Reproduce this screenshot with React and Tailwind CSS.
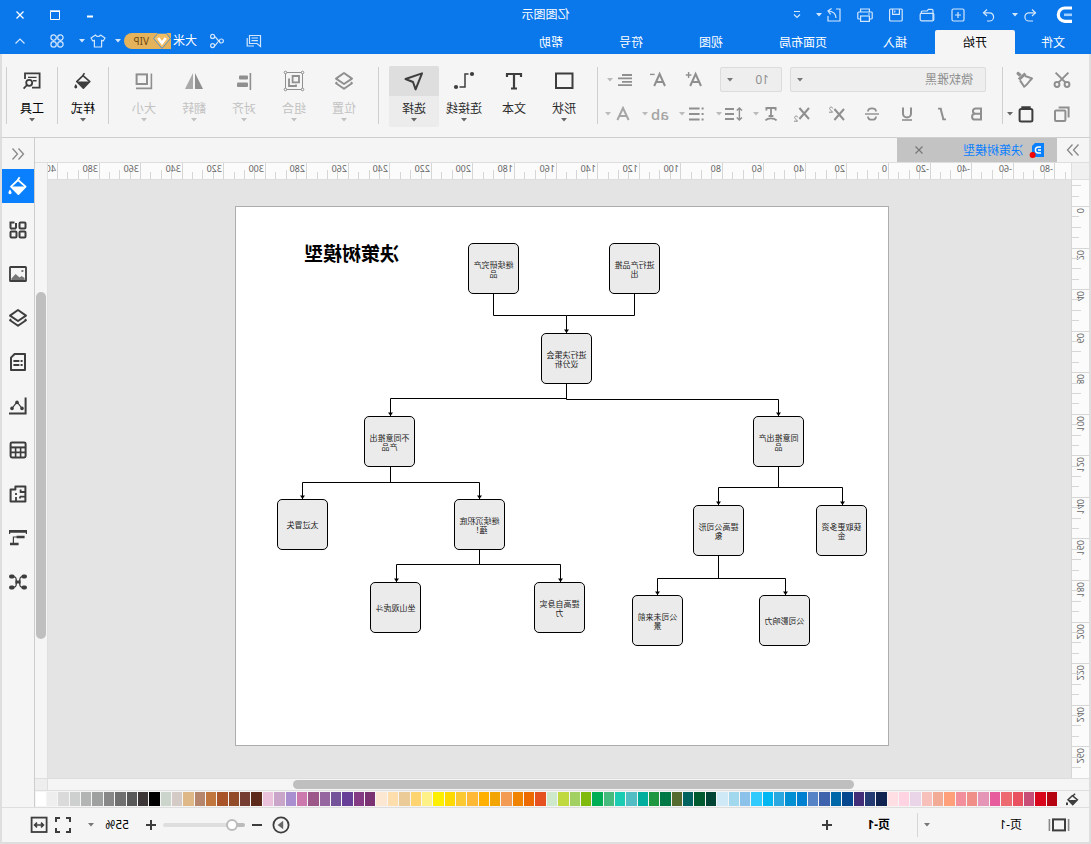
import React, { useState } from 'react';
import clsx from 'clsx';

const TABS = ['文件', '开始', '插入', '页面布局', '视图', '符号', '帮助'];

const SWATCHES = [
    '#b5040f', '#d9061b', '#c94e77', '#e95161', '#ec6a70', '#e75c9d', '#e596b7', '#f08f88', '#f38f9c', '#ffa07a',
    '#f2ab94', '#f8c0bb', '#ead5e8', '#ffd3e2', '#ffdfe4', '#10224f', '#243a72', '#422d79', '#05478f', '#0068a8',
    '#3f62ad', '#5583c5', '#0080d0', '#0090d3', '#2ca8e1', '#00b7f1', '#30cafc', '#8cc2ea', '#a1d8ee', '#cfeaf6',
    '#004436', '#005a30', '#006360', '#556b2f', '#007947', '#1f9640', '#00ae9e', '#52bdc3', '#1bccb3', '#47ba7d',
    '#00af55', '#7fba0c', '#a2d062', '#c0d93f', '#cde8ca', '#e5521f', '#ec6a00', '#f08300', '#f39b53', '#f2a500',
    '#ffb000', '#ffb936', '#fbca33', '#ffda00', '#feee00', '#fdf187', '#fed471', '#ebcc99', '#fedead', '#fce8d2',
    '#7b3272', '#843b84', '#673f96', '#74539b', '#9666a0', '#9c5888', '#cc7aae', '#a98fcf', '#c8a5c9', '#ebc2dc',
    '#5c291b', '#753c31', '#934c2a', '#a95328', '#c0763d', '#b5866b', '#deb887', '#d4cbc6', '#cbd5cc', '#000000',
    '#3d3637', '#595858', '#707070', '#888888', '#9ea1a0', '#b2b5b4', '#ced0cf', '#dadada', '#eeeeee', '#ffffff',
];

const NODES = [
    { x: 369, y: 36, text: '继续研究产品' },
    { x: 228, y: 36, text: '进行产品推出' },
    { x: 296, y: 126, text: '进行决策会议分析' },
    { x: 473, y: 209, text: '不同意推出产品' },
    { x: 84, y: 209, text: '同意推出产品' },
    { x: 560, y: 292, text: '太过冒失' },
    { x: 383, y: 292, text: '继续沉积底蕴！' },
    { x: 144, y: 298, text: '提高公司形象' },
    { x: 21, y: 298, text: '获取更多资金' },
    { x: 467, y: 375, text: '坐山观虎斗' },
    { x: 303, y: 375, text: '提高自身实力' },
    { x: 205, y: 388, text: '公司未来前景' },
    { x: 78, y: 388, text: '公司影响力' },
];

const LINKS = [
    'M253.5 87V108.5H321.5',
    'M394.5 87V108.5H321.5V126',
    'M321.5 176V192.5H109.5V209',
    'M321.5 176V191.5H497.5V209',
    'M497.5 260V275.5H585.5V292',
    'M497.5 260V275.5H408.5V292',
    'M109.5 260V280.5H45.5V298',
    'M109.5 260V280.5H169.5V298',
    'M408.5 343V357.5H491.5V375',
    'M408.5 343V357.5H327.5V375',
    'M169.5 349V371.5H230.5V388',
    'M169.5 349V371.5H102.5V388',
];

const ARROWS = [
    [321.5, 126], [109.5, 209], [497.5, 209], [585.5, 292], [408.5, 292], [45.5, 298],
    [169.5, 298], [491.5, 375], [327.5, 375], [230.5, 388], [102.5, 388],
];

// 20 ruler units in pixels
const STEP = 41.55;

function Icon({ size = 20, stroke = 2, className, children }) {
    return (
        <svg width={size} height={size} viewBox={`0 0 ${size} ${size}`} fill="none" stroke="currentColor" strokeWidth={stroke} className={clsx('shrink-0', className)} aria-hidden="true">
            {children}
        </svg>
    );
}

function Caret({ className }) {
    return (
        <svg width="6" height="4" viewBox="0 0 6 4" className={clsx('shrink-0', className)} fill="currentColor" aria-hidden="true">
            <path d="M0 0H6L3 3.6Z" />
        </svg>
    );
}

function IconButton({ label, className = 'w-6', children }) {
    return (
        <button type="button" aria-label={label} title={label} className={clsx('flex h-6 shrink-0 items-center justify-center', className)}>
            {children}
        </button>
    );
}

function Divider() {
    return <div className="mt-[13px] h-[57px] w-px shrink-0 bg-[#cfcfcf]" />;
}

/* ---------- shared drawings ---------- */

function Bucket({ className }) {
    return (
        <Icon className={className} stroke={1.8}>
            <path d="M8.4 1.2L10.2 4" />
            <path d="M10 4L17 10.6L9.6 18L2.4 10.6Z" strokeLinejoin="round" />
            <path d="M2.6 10.6H16.8L9.6 17.8Z" fill="currentColor" stroke="none" />
            <path d="M18 13.4C19 15 19.6 15.8 19.6 16.6A1.6 1.6 0 0 1 16.4 16.6C16.4 15.8 17 15 18 13.4Z" fill="currentColor" stroke="none" />
        </Icon>
    );
}

function Layers({ className }) {
    return (
        <Icon className={className} stroke={1.9}>
            <path d="M10 2L18 7.6L10 13L2 7.6Z" strokeLinejoin="round" />
            <path d="M3.2 11.2L2 12.2L10 17.8L18 12.2L16.8 11.2" strokeLinejoin="round" />
        </Icon>
    );
}

/* ---------- header ---------- */

function Logo() {
    return (
        <svg width="16" height="18" viewBox="0 0 16 18" fill="none" aria-label="logo" className="mr-[7px] shrink-0">
            <path d="M0 2.2H6.6A6.8 6.8 0 0 0 6.6 15.4H0" stroke="none" />
            <path d="M0 2H7A6.6 6.6 0 0 1 7 15.4H0" stroke="#fff" strokeWidth="3.2" />
            <path d="M0 8.8H8" stroke="#9fd0ff" strokeWidth="2.6" />
        </svg>
    );
}

function Header({ active, onChange }) {
    return (
        <header className="h-[54px] shrink-0 bg-[#0a77eb] text-white">
            <div className="grid h-[30px] grid-cols-[1fr_auto_1fr] items-center">
                <div className="flex items-center gap-[7px] pl-[19px] text-[#d3e7fc]">
                    <Logo />
                    <div className="flex items-center pr-1">
                        <IconButton label="撤销">
                            <Icon size={16} stroke={1.2}>
                                <path d="M6 2.5L2.5 5.8L6 9" />
                                <path d="M2.5 5.8H9A4 4 0 0 1 9 14H5" />
                            </Icon>
                        </IconButton>
                        <Caret />
                    </div>
                    <IconButton label="恢复">
                        <Icon size={16} stroke={1.2}>
                            <path d="M10 2.5L13.5 5.8L10 9" />
                            <path d="M13.5 5.8H7.5A4 4 0 0 0 7.5 14H10" />
                        </Icon>
                    </IconButton>
                    <IconButton label="新建">
                        <Icon size={16} stroke={1.2}>
                            <rect x="2" y="2" width="12" height="12" rx="1.5" />
                            <path d="M8 5V11M5 8H11" />
                        </Icon>
                    </IconButton>
                    <IconButton label="打开">
                        <Icon size={16} stroke={1.2}>
                            <path d="M2 13.5V3.5A1.2 1.2 0 0 1 3.2 2.3H6.5L8 4H12.5A1.2 1.2 0 0 1 13.7 5.2V6.3" />
                            <path d="M1.2 12.6V7.6A1.2 1.2 0 0 1 2.4 6.4H13.6A1.2 1.2 0 0 1 14.8 7.6V12.6A1.2 1.2 0 0 1 13.6 13.8H2.4A1.2 1.2 0 0 1 1.2 12.6Z" />
                        </Icon>
                    </IconButton>
                    <IconButton label="保存">
                        <Icon size={16} stroke={1.2}>
                            <rect x="1.8" y="2" width="12.6" height="12" rx="1" />
                            <path d="M4.6 2V7.4H11.4V2M9.2 3.4V5.6" />
                        </Icon>
                    </IconButton>
                    <IconButton label="打印">
                        <Icon size={16} stroke={1.2}>
                            <path d="M3.6 5V2H12.4V5" />
                            <path d="M3.6 12H1.6A1 1 0 0 1 .8 11V6A1 1 0 0 1 1.8 5H14.2A1 1 0 0 1 15.2 6V11A1 1 0 0 1 14.2 12H12.4" />
                            <rect x="3.6" y="9" width="8.8" height="5.4" />
                            <path d="M3 7H5" />
                        </Icon>
                    </IconButton>
                    <div className="flex items-center">
                        <IconButton label="导出">
                            <Icon size={16} stroke={1.2}>
                                <path d="M6 2H2V14H14V9" />
                                <path d="M6 11C6 7 8 4.6 13.6 4M10.4 1.4L14 4L11.4 7.4" />
                            </Icon>
                        </IconButton>
                        <Caret />
                    </div>
                    <IconButton label="更多">
                        <Icon size={10} stroke={1.2}>
                            <path d="M2 1.5H8M2 4.5L5 7.4L8 4.5" />
                        </Icon>
                    </IconButton>
                </div>
                <h1 className="text-xs">亿图图示</h1>
                <div className="flex justify-end pr-[3px]">
                    <IconButton label="最小化" className="w-[35px]">
                        <Icon size={12}><path d="M3 7.5H9" /></Icon>
                    </IconButton>
                    <IconButton label="最大化" className="w-[35px]">
                        <Icon size={12} stroke={1}><path d="M2 2.5H10.5V10.5H1.5V2" /><path d="M1 1.8H11" stroke="#fff" /></Icon>
                    </IconButton>
                    <IconButton label="关闭" className="w-[35px]">
                        <Icon size={12} stroke={1.3}><path d="M2.5 2.5L9.5 9.5M9.5 2.5L2.5 9.5" /></Icon>
                    </IconButton>
                </div>
            </div>
            <div className="flex h-6 justify-between">
                <nav className="flex">
                    {TABS.map((tab, i) => (
                        <button
                            key={tab}
                            type="button"
                            onClick={() => onChange(tab)}
                            className={clsx(
                                'h-6 pt-0.5 text-xs',
                                i === 0 ? 'w-[76px]' : 'px-7',
                                active === tab && 'rounded-t-xs bg-[#f5f5f5] text-black'
                            )}
                        >
                            {tab}
                        </button>
                    ))}
                </nav>
                <div className="flex items-center pr-[3px] pb-0.5 text-[#d3e7fc]">
                    <IconButton label="消息" className="mr-[13px] w-6">
                        <Icon size={16} stroke={1.2}>
                            <path d="M1.5 2.5H12.5V10.5H5L1.5 13.5Z" />
                            <path d="M4 5H10.5M4 7.7H10.5M14.8 5V13H8" />
                        </Icon>
                    </IconButton>
                    <IconButton label="分享" className="mr-2 w-6">
                        <Icon size={16} stroke={1.2}>
                            <circle cx="3.6" cy="8" r="2" />
                            <circle cx="12.4" cy="3.4" r="2" />
                            <circle cx="12.4" cy="12.6" r="2" />
                            <path d="M5.5 8C8 8 8.4 3.8 10.4 3.6M5.5 8C8 8 8.4 12.4 10.4 12.6" />
                        </Icon>
                    </IconButton>
                    <span className="mr-0.5 text-xs text-white">大米</span>
                    <div className="mr-1 flex h-4 w-[47px] items-center rounded-r-full rounded-l-lg bg-[#e5b35b]">
                        <svg width="18" height="16" viewBox="0 0 18 16" fill="none" aria-hidden="true">
                            <path d="M4.5 .5H13.5L17.4 5.5L9 15.4L.6 5.5Z" fill="#f3bd63" stroke="#2f86dc" strokeWidth=".8" />
                            <path d="M5.2 5L9 10L12.8 5" stroke="#fff" strokeWidth="2.6" />
                        </svg>
                        <span className="ml-1 text-[10px] leading-4 text-[#6f4a12]">VIP</span>
                    </div>
                    <Caret className="mx-[7px] -ml-px" />
                    <IconButton label="皮肤" className="w-5">
                        <Icon size={16} stroke={1.2}>
                            <path d="M5.5 2L1 5L2.8 8L4.4 7.2V14H11.6V7.2L13.2 8L15 5L10.5 2C9.6 4 6.4 4 5.5 2Z" strokeLinejoin="round" />
                        </Icon>
                    </IconButton>
                    <Caret className="mx-[3px]" />
                    <IconButton label="应用" className="mx-[7px] w-6">
                        <Icon size={16} stroke={1.2}>
                            <circle cx="4.6" cy="4.6" r="2.7" />
                            <circle cx="11.4" cy="4.6" r="2.7" />
                            <circle cx="4.6" cy="11.4" r="2.7" />
                            <circle cx="11.4" cy="11.4" r="2.7" />
                        </Icon>
                    </IconButton>
                    <IconButton label="收起功能区" className="w-[35px]">
                        <Icon size={12} stroke={1.2}><path d="M1.5 8.5L6 4L10.5 8.5" /></Icon>
                    </IconButton>
                </div>
            </div>
        </header>
    );
}

/* ---------- ribbon ---------- */

function BigButton({ label, active, disabled, strong, caret = true, children }) {
    return (
        <button
            type="button"
            disabled={disabled}
            className={clsx(
                'mt-3 flex h-[61px] w-[50px] shrink-0 flex-col items-center',
                active && 'rounded-xs bg-[#ececec]',
                disabled ? 'text-[#c2c2c2]' : strong ? 'text-black' : 'text-[#2b2b2b]'
            )}
        >
            <span className={clsx('flex h-[30px] w-full items-center justify-center', active && 'rounded-t-xs bg-[#dedede]', disabled ? 'text-[#8f8f8f]' : 'text-[#3d3d3d]')}>
                {children}
            </span>
            <span className="mt-[5px] h-4 text-xs leading-4">{label}</span>
            {caret && <Caret className={clsx('mt-px', disabled ? 'text-[#c2c2c2]' : 'text-[#666]')} />}
        </button>
    );
}

function DropTool({ label, children }) {
    return (
        <div className="flex items-center">
            <IconButton label={label}>{children}</IconButton>
            <Caret className="text-[#bbb]" />
        </div>
    );
}

function Select({ label, className, value, options, caretClass = 'right-[6px]' }) {
    return (
        <div className={clsx('relative', className)}>
            <select aria-label={label} defaultValue={value} className="h-full w-full appearance-none bg-transparent outline-none">
                {options.map((o) => (
                    <option key={o}>{o}</option>
                ))}
            </select>
            <Caret className={clsx('pointer-events-none absolute top-1/2 -translate-y-1/2 text-[#777]', caretClass)} />
        </div>
    );
}

function Ribbon() {
    return (
        <div className="flex h-[84px] shrink-0 border-x-2 border-b border-x-[#dedede] border-b-[#cfcfcf] bg-[#f5f5f5] text-[#8f8f8f]">
            <div className="flex w-[86px] shrink-0 flex-col gap-[10px] pt-[14px] pl-2">
                <div className="flex">
                    <IconButton label="剪切" className="w-[37px]">
                        <Icon size={18}>
                            <circle cx="4" cy="13.5" r="2.4" />
                            <circle cx="14" cy="13.5" r="2.4" />
                            <path d="M2.6 1.6L12.6 11.6M15.4 1.6L5.4 11.6" />
                        </Icon>
                    </IconButton>
                    <IconButton label="格式刷" className="w-[37px]">
                        <Icon size={18}>
                            <path d="M12.4 3.6L15.4 .8A1.8 1.8 0 0 1 17.4 3.2L14.6 5.8Z" fill="currentColor" stroke="none" />
                            <path d="M9.6 1.6L16.2 7.6L14 9.6L7.6 3.8Z" fill="currentColor" stroke="none" />
                            <path d="M9 5L2 7.4C4 9 5.4 12.6 9.8 15.8L14 9.4" strokeLinejoin="round" />
                        </Icon>
                    </IconButton>
                </div>
                <div className="flex items-center">
                    <IconButton label="复制" className="w-[37px]">
                        <Icon size={18}>
                            <path d="M12.4 2.4H2.4V12.4" />
                            <rect x="5.6" y="5.6" width="10.4" height="10.4" rx="1" />
                        </Icon>
                    </IconButton>
                    <IconButton label="粘贴" className="ml-[5px] w-[26px] text-[#3d3d3d]">
                        <Icon size={18}>
                            <rect x="2.6" y="4" width="12.8" height="12.4" rx="1.5" />
                            <path d="M5.6 5V2.5H12.4V5" strokeWidth="2.6" />
                        </Icon>
                    </IconButton>
                    <Caret className="text-[#666]" />
                </div>
            </div>
            <Divider />
            <div className="flex w-[404px] shrink-0 flex-col gap-[10px] pt-[13px]">
                <div className="flex h-[25px] items-center pl-4 text-xs">
                    <Select label="字体" value="微软雅黑" options={['微软雅黑', '宋体', '黑体']} className="h-[25px] w-[196px] rounded-xs border border-[#dcdcdc] bg-[#eee] pl-3" />
                    <Select label="字号" value="10" options={['8', '9', '10', '12', '14']} className="ml-2 h-[25px] w-[62px] rounded-xs border border-[#dcdcdc] bg-[#eee] pl-3" />
                    <IconButton label="增大字号" className="ml-2 w-9">
                        <Icon size={18}>
                            <path d="M2 15L7.4 3L12.8 15M4 11H11" />
                            <path d="M14.4 1V7M11.6 4H17.2" strokeWidth="1.4" />
                        </Icon>
                    </IconButton>
                    <IconButton label="减小字号" className="w-9">
                        <Icon size={18}>
                            <path d="M2 15L7.4 3L12.8 15M4 11H11" />
                            <path d="M12.4 3.4H17" strokeWidth="1.4" />
                        </Icon>
                    </IconButton>
                    <div className="ml-[3px]">
                        <DropTool label="对齐方式">
                            <Icon size={16}>
                                <path d="M1 3H11M1 6.4H15M1 9.8H11M1 13.2H15" strokeWidth="1.8" />
                            </Icon>
                        </DropTool>
                    </div>
                </div>
                <div className="flex items-center pl-[7px]">
                    <IconButton label="加粗" className="w-[35px]">
                        <Icon size={16}><path d="M4 2.4H9.4A2.7 2.7 0 0 1 9.4 7.8H4ZM4 7.8H10A2.9 2.9 0 0 1 10 13.6H4Z" /></Icon>
                    </IconButton>
                    <IconButton label="斜体" className="w-[35px]">
                        <Icon size={16}><path d="M9.4 2.6L6.6 13.4" /><path d="M8.4 2.6H12M4 13.4H7.6" strokeWidth="1.6" /></Icon>
                    </IconButton>
                    <IconButton label="下划线" className="w-[35px]">
                        <Icon size={16}><path d="M4 1.6V7.4A4 4 0 0 0 12 7.4V1.6" /><path d="M3 14H13" strokeWidth="1.6" /></Icon>
                    </IconButton>
                    <IconButton label="删除线" className="w-[35px]">
                        <Icon size={16} stroke={1.8}><path d="M12 5.6C12 1.4 4 1.4 4 5.6M4 10.4C4 14.8 12 14.8 12 10.4" /><path d="M1 8H15" strokeWidth="1.4" /></Icon>
                    </IconButton>
                    <IconButton label="上标" className="w-[35px]">
                        <Icon size={18}>
                            <path d="M2 4L11.6 15M11.6 4L2 15" />
                            <path d="M13.4 3.4C13.4 1.6 16.6 1.6 16.4 3.6C16.2 5 14 5.8 13.4 7.2H17" strokeWidth="1" />
                        </Icon>
                    </IconButton>
                    <IconButton label="下标" className="w-[35px]">
                        <Icon size={18}>
                            <path d="M2 3L11.6 14M11.6 3L2 14" />
                            <path d="M13.4 12.4C13.4 10.6 16.6 10.6 16.4 12.6C16.2 14 14 14.8 13.4 16.2H17" strokeWidth="1" />
                        </Icon>
                    </IconButton>
                    <div className="ml-0.5 flex gap-[7px]">
                        <DropTool label="文字方向">
                            <Icon size={16} stroke={1.8}><path d="M3.4 4.4V2H12.6V4.4M8 2V10M5.6 10H10.4M2.4 14.4C5 11.8 11 11.8 13.6 14.4" /></Icon>
                        </DropTool>
                        <DropTool label="行距">
                            <Icon size={18}>
                                <path d="M9 4H18M9 9H18M9 14H18" />
                                <path d="M3.6 3V15M1 5.6L3.6 3L6.2 5.6M1 12.4L3.6 15L6.2 12.4" strokeWidth="1.4" />
                            </Icon>
                        </DropTool>
                        <DropTool label="项目符号">
                            <Icon size={16}><path d="M5.4 2.6H16M5.4 8H16M5.4 13.4H16M1.4 2.6H3.4M1.4 8H3.4M1.4 13.4H3.4" /></Icon>
                        </DropTool>
                        <DropTool label="高亮">
                            <span className="font-['Open_Sans'] text-[15px] leading-6 font-semibold text-[#a5a5a5]">ab</span>
                        </DropTool>
                        <DropTool label="字体颜色">
                            <Icon size={16} className="text-[#a5a5a5]"><path d="M2.4 14L8 2L13.6 14M4.4 10H11.6" /></Icon>
                        </DropTool>
                    </div>
                </div>
            </div>
            <Divider />
            <div className="ml-2 flex">
                <BigButton label="形状">
                    <Icon size={24}><rect x="3.5" y="4.5" width="16.5" height="14.5" /></Icon>
                </BigButton>
                <BigButton label="文本" caret={false}>
                    <Icon size={24} stroke={2.2}><path d="M5 8V5H19V8M12 5V19.5M9 19.5H15" /></Icon>
                </BigButton>
                <BigButton label="连接线">
                    <Icon size={24} stroke={1.5}>
                        <circle cx="4" cy="5" r="2.1" fill="currentColor" stroke="none" />
                        <circle cx="20" cy="18" r="2.1" fill="currentColor" stroke="none" />
                        <path d="M7.5 5H11V18H16.5" />
                    </Icon>
                </BigButton>
                <BigButton label="选择" active>
                    <Icon size={24}><path d="M20.5 10L4 4.4L10.4 20.4L13 13Z" strokeLinejoin="round" /></Icon>
                </BigButton>
            </div>
            <div className="ml-2.5 flex">
                <Divider />
                <div className="ml-[9px] flex">
                    <BigButton label="位置" disabled><Layers /></BigButton>
                    <BigButton label="组合" disabled>
                        <Icon size={22} stroke={1}>
                            <rect x="2.5" y="2.5" width="17" height="17" />
                            <g fill="#f5f5f5">
                                <circle cx="2.5" cy="2.5" r="1.3" />
                                <circle cx="19.5" cy="2.5" r="1.3" />
                                <circle cx="2.5" cy="19.5" r="1.3" />
                                <circle cx="19.5" cy="19.5" r="1.3" />
                            </g>
                            <path d="M6 6H12.4V12.4H6ZM15 9.4H16V16H9V14.6" strokeWidth="1.8" />
                        </Icon>
                    </BigButton>
                    <BigButton label="对齐" disabled>
                        <Icon size={20} stroke={1.6}>
                            <path d="M3.6 2V19" />
                            <rect x="6" y="4.4" width="9" height="4.2" rx="1" fill="currentColor" stroke="none" />
                            <rect x="6" y="11.4" width="11" height="4.6" rx="1" fill="currentColor" stroke="none" />
                        </Icon>
                    </BigButton>
                    <BigButton label="翻转" disabled>
                        <Icon size={20} stroke={0}>
                            <path d="M9 2V18H1Z" fill="currentColor" />
                            <path d="M11 2V18H19Z" fill="#a9a9a9" />
                        </Icon>
                    </BigButton>
                    <BigButton label="大小" disabled>
                        <Icon size={20}>
                            <rect x="7" y="3.4" width="10.4" height="9.6" />
                            <path d="M2.6 2.4V17.4H18" strokeWidth="1.6" />
                        </Icon>
                    </BigButton>
                </div>
            </div>
            <div className="ml-auto flex">
                <Divider />
                <BigButton label="样式" strong><Bucket className="size-[18px]" /></BigButton>
                <Divider />
                <BigButton label="工具" strong>
                    <Icon size={20} stroke={1.8}>
                        <path d="M10 16.6H2.4V2.4H17V8" />
                        <path d="M5.4 6.4H14M5.4 9.8H9" strokeWidth="1.4" />
                        <circle cx="12.8" cy="11.8" r="3" />
                        <path d="M15 14L18.4 17.6" />
                    </Icon>
                </BigButton>
                <Divider />
                <div className="w-1" />
            </div>
        </div>
    );
}

/* ---------- workspace ---------- */

function Ruler({ vertical, last }) {
    const origin = vertical ? 26 : 182;
    const ticks = [];
    for (let i = -17; i <= last; i++) {
        const p = Math.round(origin + (i * STEP) / 4);
        if (p < 0) continue;
        const len = i % 4 === 0 ? 17 : i % 2 === 0 ? 9 : 7;
        ticks.push({ i, p, len });
    }

    return (
        <svg
            className={clsx('block overflow-hidden bg-[#fbfbfb]', vertical ? 'h-full w-[17px]' : 'h-4 min-w-0 flex-1')}
            fontFamily="'Noto Sans', sans-serif"
            fontSize="9"
            fill="#666"
        >
            {ticks.map(({ i, p, len }) => (
                <g key={i}>
                    {vertical ? (
                        <rect x={17 - len} y={p} width={len} height="1" fill="#d6d6d6" />
                    ) : (
                        <rect x={p} y={16 - Math.min(len, 16)} width="1" height={len} fill="#d6d6d6" />
                    )}
                    {i % 4 === 0 &&
                        (vertical ? (
                            <text transform={`translate(12 ${p + 2}) rotate(-90)`} textAnchor="end">{i * 5}</text>
                        ) : (
                            <text x={p + 2} y="9">{i * 5}</text>
                        ))}
                </g>
            ))}
        </svg>
    );
}

function DocTabs() {
    return (
        <div className="flex h-[25px] shrink-0 border-b border-[#dedede]">
            <IconButton label="展开左侧栏" className="w-8 text-[#888]">
                <Icon size={14} stroke={1.3}><path d="M1.5 1.5L6.5 7L1.5 12.5M7.5 1.5L12.5 7L7.5 12.5" /></Icon>
            </IconButton>
            <div className="flex w-40 items-center bg-[#c3c3c3] pl-[13px]">
                <svg width="15" height="16" viewBox="0 0 15 16" fill="none" aria-hidden="true">
                    <path d="M0 1H9L12 4V15H0Z" fill="#0a80ff" />
                    <path d="M3 5H5.6A3 3 0 0 1 5.6 11H3M3 8H6" stroke="#fff" strokeWidth="1.4" />
                    <circle cx="11.4" cy="13" r="3" fill="#f40000" />
                </svg>
                <span className="ml-[6px] pt-0.5 text-xs text-[#0a80ff]">决策树模型</span>
                <IconButton label="关闭文档" className="mr-[10px] ml-auto w-6 text-[#777]">
                    <Icon size={10} stroke={1.2}><path d="M1.5 1.5L8.5 8.5M8.5 1.5L1.5 8.5" /></Icon>
                </IconButton>
            </div>
        </div>
    );
}

function Page() {
    return (
        <div className="relative mt-[26px] ml-[182px] h-[540px] w-[654px] border border-[#adadad] bg-white">
            <svg className="absolute inset-0 h-full w-full" fill="none" stroke="#000" aria-hidden="true">
                {LINKS.map((d) => (
                    <path key={d} d={d} />
                ))}
                {ARROWS.map(([x, y]) => (
                    <path key={x} d={`M${x - 2.5} ${y - 3.5}H${x + 2.5}L${x} ${y}Z`} fill="#000" stroke="none" />
                ))}
            </svg>
            {NODES.map((n) => (
                <div
                    key={n.text}
                    className="absolute flex size-[51px] items-center justify-center rounded-[5px] border border-black bg-[#ebebeb] px-1 text-center text-[8px] leading-[9px] break-all text-[#222]"
                    style={{ left: n.x, top: n.y }}
                >
                    {n.text}
                </div>
            ))}
            <h2 className="absolute top-[35px] left-[489px] text-[19px] leading-6 font-bold whitespace-nowrap text-black">决策树模型</h2>
        </div>
    );
}

function Workspace() {
    return (
        <div className="flex min-h-0 flex-1">
            <div className="flex min-w-0 flex-1 flex-col">
                <div className="flex h-[17px] shrink-0 border-b border-[#dedede]">
                    <div className="w-[18px] shrink-0 border-r border-[#dedede] bg-[#f0f0f0]" />
                    <Ruler last={80} />
                </div>
                <div className="flex min-h-0 flex-1">
                    <div className="w-[18px] shrink-0 border-r border-[#d6d6d6]">
                        <Ruler vertical last={54} />
                    </div>
                    <main className="min-w-0 flex-1 overflow-hidden bg-[#e4e4e4]">
                        <Page />
                    </main>
                </div>
            </div>
            <div className="w-[13px] shrink-0 border-l border-[#e0e0e0] pl-px">
                <div className="mt-[129px] h-[347px] w-[10px] rounded-full bg-[#bfbfbf]" />
            </div>
        </div>
    );
}

function Palette() {
    return (
        <div className="flex h-4 shrink-0 items-center pr-px">
            <div className="flex w-8 shrink-0 items-center justify-center text-[#3d3d3d]">
                <svg width="13" height="13" viewBox="0 0 20 20" fill="none" stroke="currentColor" strokeWidth="2.2" aria-hidden="true">
                    <path d="M6 1L10 5M10 4L17 10.6L9.6 18L2.4 10.6Z" />
                    <path d="M2.6 10.6H16.8L9.6 17.8Z" fill="currentColor" stroke="none" />
                    <rect x="17" y="14.6" width="3" height="4" fill="currentColor" stroke="none" />
                </svg>
            </div>
            <div className="flex h-[14px] min-w-0 flex-1 gap-px">
                {SWATCHES.map((c) => (
                    <button key={c} type="button" aria-label={c} className="h-full min-w-0 flex-1" style={{ backgroundColor: c }} />
                ))}
            </div>
        </div>
    );
}

/* ---------- right side bar ---------- */

const PANELS = [
    { label: '填充', icon: <Bucket /> },
    {
        label: '符号库',
        icon: (
            <Icon>
                <rect x="2.5" y="2.5" width="6" height="6" rx="1" />
                <path d="M12 8.5H16A1 1 0 0 0 17.5 7.5V2.5H13.5M12 3V8.5" />
                <rect x="2.5" y="11.5" width="6" height="6" rx="1" />
                <rect x="11.5" y="11.5" width="6" height="6" rx="1" />
            </Icon>
        ),
    },
    {
        label: '图片',
        icon: (
            <Icon stroke={1.8}>
                <rect x="2" y="3" width="16" height="14" rx=".6" />
                <path d="M3.4 16V14L6.4 12L8.4 13.6L12.4 10L16.6 14.4V16Z" fill="#777" stroke="none" />
                <rect x="4.6" y="6" width="2" height="2" fill="#777" stroke="none" />
            </Icon>
        ),
    },
    { label: '图层', icon: <Layers /> },
    {
        label: '文档',
        icon: (
            <Icon>
                <path d="M3 2H13.4L17 5.6V18H3Z" strokeLinejoin="round" />
                <path d="M5.4 9H7.4M8.6 9H14.6M5.4 13H7.4M8.6 13H14.6" strokeWidth="1.8" />
            </Icon>
        ),
    },
    {
        label: '图表',
        icon: (
            <Icon>
                <path d="M2.4 1.6V17.4H19" />
                <path d="M6 12.4L11 6L16 12.4" strokeWidth="1.2" />
                <circle cx="6" cy="12.4" r="1.8" fill="currentColor" stroke="none" />
                <circle cx="11" cy="6.4" r="1.8" fill="currentColor" stroke="none" />
                <circle cx="16" cy="12.4" r="1.8" fill="currentColor" stroke="none" />
            </Icon>
        ),
    },
    {
        label: '表格',
        icon: (
            <Icon>
                <rect x="2.4" y="2.4" width="15" height="15" rx="1.4" />
                <path d="M2.4 7.4H17.4" />
                <path d="M2.4 12.4H17.4M7.4 7.4V17.4M12.4 7.4V17.4" strokeWidth="1.6" />
            </Icon>
        ),
    },
    {
        label: '平面图',
        icon: (
            <Icon>
                <path d="M2.6 2.6H12.6V5.6H17.4V17.4H2.6Z" strokeLinejoin="round" />
                <path d="M2.6 8H7.4V5.4M2.6 12.6H8M8 12.4V14.6M12 17V13M12 9V11" strokeWidth="1.8" />
            </Icon>
        ),
    },
    {
        label: '甘特图',
        icon: (
            <Icon stroke={2.6}>
                <path d="M1 3.4H19M3.4 9H11.4M9.4 16H18" />
                <path d="M1.6 2V6M18.4 2V6M11 9H14.6V15" strokeWidth="1.2" />
            </Icon>
        ),
    },
    {
        label: '思维导图',
        icon: (
            <Icon stroke={1.4}>
                <path d="M5 4.6C9 4.6 8 7 8.4 10C8 13 9 15.4 5 15.4M15 4.6C11 4.6 12 7 11.6 10C12 13 11 15.4 15 15.4" />
                <path d="M3 4.6H4.6M15.4 4.6H17M3 15.4H4.6M15.4 15.4H17" strokeWidth="4" strokeLinecap="round" />
                <path d="M7.4 10H12.6" strokeWidth="3" />
            </Icon>
        ),
    },
];

function SideBar() {
    const [panel, setPanel] = useState('填充');

    return (
        <aside className="flex w-[33px] shrink-0 flex-col border-l border-[#cdcdcd] text-[#3d3d3d]">
            <div className="flex h-[31px] items-center justify-center text-[#888]">
                <IconButton label="收起右侧栏">
                    <Icon size={14} stroke={1.3}><path d="M6.5 1.5L1.5 7L6.5 12.5M12.5 1.5L7.5 7L12.5 12.5" /></Icon>
                </IconButton>
            </div>
            {PANELS.map(({ label, icon }) => (
                <button
                    key={label}
                    type="button"
                    aria-label={label}
                    title={label}
                    onClick={() => setPanel(label)}
                    className={clsx('mb-[10px] flex h-[34px] w-full items-center justify-center', panel === label && 'bg-[#0a80ff] text-white')}
                >
                    {icon}
                </button>
            ))}
        </aside>
    );
}

/* ---------- status bar ---------- */

function StatusBar() {
    const [zoom, setZoom] = useState(10);

    return (
        <footer className="flex h-[35px] shrink-0 items-center border-t border-[#dedede] pr-[25px] pl-[18px] text-xs text-[#3d3d3d]">
            <IconButton label="页面列表">
                <Icon size={22}>
                    <rect x="5" y="5.4" width="12" height="11" />
                    <path d="M1.4 5V17M20.6 5V17" stroke="#888" strokeWidth="1.6" />
                </Icon>
            </IconButton>
            <Select label="当前页" value="页-1" options={['页-1']} className="ml-[25px] h-6 w-[105px] border-r border-[#d6d6d6] text-black" />
            <button type="button" className="ml-[27px] font-bold text-black">页-1</button>
            <IconButton label="新增页" className="ml-[28px] w-6">
                <Icon size={12}><path d="M6 1V11M1 6H11" /></Icon>
            </IconButton>
            <div className="ml-auto flex items-center">
                <IconButton label="演示">
                    <Icon size={18} stroke={1.8}>
                        <circle cx="9" cy="9" r="7.6" />
                        <path d="M6.8 4.8V13.2L12.4 9Z" fill="#666" stroke="none" />
                    </Icon>
                </IconButton>
                <IconButton label="缩小">
                    <Icon size={12}><path d="M1 6H11" /></Icon>
                </IconButton>
                <input
                    type="range"
                    aria-label="缩放"
                    min="0"
                    max="100"
                    value={zoom}
                    onChange={(e) => setZoom(Number(e.target.value))}
                    className="h-1 w-[82px] appearance-none rounded-full bg-[#dedede] [&::-webkit-slider-thumb]:size-3 [&::-webkit-slider-thumb]:appearance-none [&::-webkit-slider-thumb]:rounded-full [&::-webkit-slider-thumb]:border-2 [&::-webkit-slider-thumb]:border-[#bbb] [&::-webkit-slider-thumb]:bg-white"
                    style={{ backgroundImage: `linear-gradient(to right, #bbb ${zoom}%, transparent ${zoom}%)` }}
                />
                <IconButton label="放大">
                    <Icon size={12}><path d="M6 1V11M1 6H11" /></Icon>
                </IconButton>
                <Select label="显示比例" value="55%" options={['55%', '100%']} className="mr-[11px] ml-[10px] h-6 w-[43px] text-black" caretClass="right-0.5" />
                <IconButton label="全屏">
                    <Icon size={18}><path d="M2 6V2H6M12 2H16V6M16 12V16H12M6 16H2V12" /></Icon>
                </IconButton>
                <IconButton label="适应宽度">
                    <Icon size={18} stroke={1.8}>
                        <rect x="1.4" y="1.6" width="15" height="14.4" />
                        <path d="M4.6 9H13.2M7 6.6L4.6 9L7 11.4M11 6.6L13.4 9L11 11.4" strokeWidth="1.6" />
                    </Icon>
                </IconButton>
            </div>
        </footer>
    );
}

export default function App() {
    const [tab, setTab] = useState('开始');

    return (
        // The whole window is shown flipped left to right
        <div className="flex h-screen -scale-x-100 flex-col overflow-hidden bg-[#f5f5f5] font-['Noto_Sans','Noto_Sans_CJK_SC',sans-serif]">
            <Header active={tab} onChange={setTab} />
            <Ribbon />
            <div className="flex min-h-0 flex-1 flex-col border-x-2 border-b-2 border-[#dedede]">
                <div className="flex min-h-0 flex-1">
                    <div className="flex min-w-0 flex-1 flex-col">
                        <DocTabs />
                        <Workspace />
                        <div className="flex h-[13px] shrink-0 border-y border-[#dedede]">
                            <div className="flex-1 py-px">
                                <div className="ml-[235px] h-[9px] w-[561px] rounded-full bg-[#bfbfbf]" />
                            </div>
                            <div className="w-[13px] border-l border-[#dedede] bg-[#eee]" />
                        </div>
                        <Palette />
                    </div>
                    <SideBar />
                </div>
                <StatusBar />
            </div>
        </div>
    );
}
